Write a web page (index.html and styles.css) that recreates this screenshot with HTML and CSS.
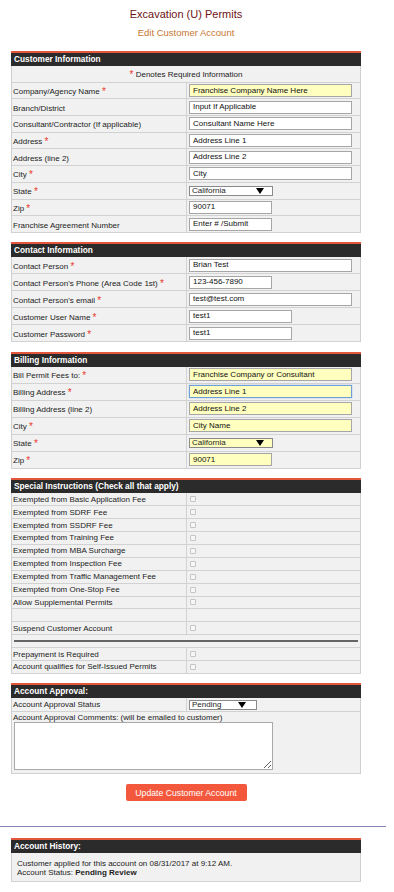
FILE: index.html
```html
<!DOCTYPE html>
<html lang="en">
<head>
    <meta charset="UTF-8">
    <meta name="viewport" content="width=device-width, initial-scale=1.0">
    <title>Excavation (U) Permits - Edit Customer Account</title>
    <link rel="stylesheet" href="styles.css">
</head>
<body>
<div class="page">
    <h1>Excavation (U) Permits</h1>
    <h2>Edit Customer Account</h2>

    <!-- Customer -->
    <div class="panel customer">
        <div class="panel-head">Customer Information</div>
        <div class="row note"><span class="req">*</span>&nbsp;Denotes Required Information</div>
        <div class="row">
            <div class="label">Company/Agency Name <span class="req">*</span></div>
            <div class="field"><input class="full yellow" value="Franchise Company Name Here"></div>
        </div>
        <div class="row">
            <div class="label">Branch/District</div>
            <div class="field"><input class="full" value="Input If Applicable"></div>
        </div>
        <div class="row">
            <div class="label">Consultant/Contractor (If applicable)</div>
            <div class="field"><input class="full" value="Consultant Name Here"></div>
        </div>
        <div class="row">
            <div class="label">Address <span class="req">*</span></div>
            <div class="field"><input class="full" value="Address Line 1"></div>
        </div>
        <div class="row">
            <div class="label">Address (line 2)</div>
            <div class="field"><input class="full" value="Address Line 2"></div>
        </div>
        <div class="row">
            <div class="label">City <span class="req">*</span></div>
            <div class="field"><input class="full" value="City"></div>
        </div>
        <div class="row">
            <div class="label">State <span class="req">*</span></div>
            <div class="field"><div class="select"><span>California</span><i class="arrow"></i></div></div>
        </div>
        <div class="row">
            <div class="label">Zip <span class="req">*</span></div>
            <div class="field"><input class="short" value="90071"></div>
        </div>
        <div class="row">
            <div class="label">Franchise Agreement Number</div>
            <div class="field"><input class="short" value="Enter # /Submit"></div>
        </div>
    </div>

    <!-- Contact -->
    <div class="panel contact">
        <div class="panel-head">Contact Information</div>
        <div class="row">
            <div class="label">Contact Person <span class="req">*</span></div>
            <div class="field"><input class="full" value="Brian Test"></div>
        </div>
        <div class="row">
            <div class="label">Contact Person's Phone (Area Code 1st) <span class="req">*</span></div>
            <div class="field"><input class="short" value="123-456-7890"></div>
        </div>
        <div class="row">
            <div class="label">Contact Person's email <span class="req">*</span></div>
            <div class="field"><input class="full" value="test@test.com"></div>
        </div>
        <div class="row">
            <div class="label">Customer User Name <span class="req">*</span></div>
            <div class="field"><input class="mid" value="test1"></div>
        </div>
        <div class="row">
            <div class="label">Customer Password <span class="req">*</span></div>
            <div class="field"><input class="mid" value="test1"></div>
        </div>
    </div>

    <!-- Billing -->
    <div class="panel contact">
        <div class="panel-head">Billing Information</div>
        <div class="row">
            <div class="label">Bill Permit Fees to: <span class="req">*</span></div>
            <div class="field"><input class="full yellow" value="Franchise Company or Consultant"></div>
        </div>
        <div class="row">
            <div class="label">Billing Address <span class="req">*</span></div>
            <div class="field"><input class="full yellow focus" value="Address Line 1"></div>
        </div>
        <div class="row">
            <div class="label">Billing Address (line 2)</div>
            <div class="field"><input class="full yellow" value="Address Line 2"></div>
        </div>
        <div class="row">
            <div class="label">City <span class="req">*</span></div>
            <div class="field"><input class="full yellow" value="City Name"></div>
        </div>
        <div class="row">
            <div class="label">State <span class="req">*</span></div>
            <div class="field"><div class="select yellow"><span>California</span><i class="arrow"></i></div></div>
        </div>
        <div class="row">
            <div class="label">Zip <span class="req">*</span></div>
            <div class="field"><input class="short yellow" value="90071"></div>
        </div>
    </div>

    <!-- Special instructions -->
    <div class="panel special">
        <div class="panel-head">Special Instructions (Check all that apply)</div>
        <div class="row"><div class="label">Exempted from Basic Application Fee</div><div class="field"><span class="check"></span></div></div>
        <div class="row"><div class="label">Exempted from SDRF Fee</div><div class="field"><span class="check"></span></div></div>
        <div class="row"><div class="label">Exempted from SSDRF Fee</div><div class="field"><span class="check"></span></div></div>
        <div class="row"><div class="label">Exempted from Training Fee</div><div class="field"><span class="check"></span></div></div>
        <div class="row"><div class="label">Exempted from MBA Surcharge</div><div class="field"><span class="check"></span></div></div>
        <div class="row"><div class="label">Exempted from Inspection Fee</div><div class="field"><span class="check"></span></div></div>
        <div class="row"><div class="label">Exempted from Traffic Management Fee</div><div class="field"><span class="check"></span></div></div>
        <div class="row"><div class="label">Exempted from One-Stop Fee</div><div class="field"><span class="check"></span></div></div>
        <div class="row"><div class="label">Allow Supplemental Permits</div><div class="field"><span class="check"></span></div></div>
        <div class="row"><div class="label"></div><div class="field"></div></div>
        <div class="row"><div class="label">Suspend Customer Account</div><div class="field"><span class="check"></span></div></div>
        <div class="row sep"><div class="rule"></div></div>
        <div class="row"><div class="label">Prepayment is Required</div><div class="field"><span class="check"></span></div></div>
        <div class="row"><div class="label">Account qualifies for Self-Issued Permits</div><div class="field"><span class="check"></span></div></div>
    </div>

    <!-- Approval -->
    <div class="panel approval">
        <div class="panel-head">Account Approval:</div>
        <div class="row">
            <div class="label">Account Approval Status</div>
            <div class="field"><div class="select narrow"><span>Pending</span><i class="arrow"></i></div></div>
        </div>
        <div class="comments">
            <div class="comments-label">Account Approval Comments: (will be emailed to customer)</div>
            <textarea></textarea>
        </div>
    </div>

    <button class="btn">Update Customer Account</button>
</div>

<hr class="divider">

<div class="page">
    <div class="panel history">
        <div class="panel-head">Account History:</div>
        <div class="history-body">
            Customer applied for this account on 08/31/2017 at 9:12 AM.<br>
            Account Status: <b>Pending Review</b>
        </div>
    </div>
</div>
</body>
</html>
```

FILE: styles.css
```css
body {
    margin: 0;
    font-family: "Liberation Sans", Arial, sans-serif;
    font-size: 8px;
    color: #1c1c1c;
    background-color: #fff;
}

.page {
    width: 372px;
}

h1 {
    margin: 0;
    padding-top: 7px;
    font-size: 11px;
    line-height: 14px;
    font-weight: normal;
    text-align: center;
    color: #6e1414;
}

h2 {
    margin: 6px 0 0;
    font-size: 9.5px;
    line-height: 12px;
    font-weight: normal;
    text-align: center;
    color: #c7762f;
}

.panel {
    width: 350px;
    box-sizing: border-box;
    margin: 12px 0 0 11px;
    background-color: #f1f1f1;
    border-left: 1px solid #cfcfcf;
    border-right: 1px solid #cfcfcf;
}

.panel + .panel {
    margin-top: 9.5px;
}

.panel-head {
    margin: 0 -1px;
    height: 13px;
    line-height: 13px;
    padding-left: 3px;
    border-top: 2px solid #e3583c;
    background-color: #2b2b2b;
    color: #fff;
    font-size: 8.3px;
    font-weight: bold;
}

.row {
    display: flex;
    align-items: center;
    height: 16.7px;
    box-sizing: border-box;
    border-bottom: 1px solid #d2d2d2;
}

.contact .row {
    height: 17px;
}

.special .row {
    height: 12.9px;
}

.approval .row {
    height: 13.7px;
}

.label {
    align-self: stretch;
    display: flex;
    align-items: center;
    width: 175px;
    flex-shrink: 0;
    box-sizing: border-box;
    padding: 2px 0 0 1px;
    border-right: 1px solid #d2d2d2;
    white-space: pre;
}

.special .label,
.approval .label {
    padding-top: 0;
}

.field {
    display: flex;
    align-items: center;
    padding-left: 2px;
}

.note {
    justify-content: center;
    padding-top: 2px;
}

.req {
    color: #e8392c;
    font-size: 10px;
    vertical-align: 1px;
}

input {
    height: 13px;
    box-sizing: border-box;
    margin: 0;
    padding: 0 3px 1px;
    border: 1px solid #a6a6a6;
    background-color: #fff;
    color: #111;
    font-family: inherit;
    font-size: 8px;
    outline: none;
}

input.full {
    width: 163px;
}

input.short {
    width: 83px;
}

input.mid {
    width: 103px;
}

.yellow {
    background-color: #ffffbf !important;
}

input.focus {
    border-color: #6f9fd6;
    box-shadow: 0 0 1px #6f9fd6;
}

.select {
    display: flex;
    align-items: center;
    justify-content: space-between;
    width: 84px;
    height: 10px;
    box-sizing: border-box;
    padding: 0 8px 0 2px;
    border: 1px solid #8a8a8a;
    background-color: #fff;
    line-height: 8px;
}

.select.narrow {
    width: 68px;
    padding-right: 10px;
}

.arrow {
    width: 0;
    height: 0;
    border-left: 4px solid transparent;
    border-right: 4px solid transparent;
    border-top: 6px solid #000;
}

.check {
    width: 6px;
    height: 6px;
    box-sizing: border-box;
    margin-left: 1px;
    border: 1px solid #c4c4c4;
    border-radius: 1px;
    background-color: #f7f7f7;
}

.sep {
    padding: 0 2px;
}

.rule {
    flex: 1;
    height: 2px;
    background-color: #666;
}

.comments {
    padding: 1px 0 3px 2px;
    border-bottom: 1px solid #d2d2d2;
}

.comments-label {
    line-height: 9px;
    padding-left: 0;
    margin-left: -1px;
}

textarea {
    display: block;
    width: 259px;
    height: 48px;
    box-sizing: border-box;
    margin: 0;
    border: 1px solid #a9a9a9;
    background-color: #fff;
    font-family: inherit;
    font-size: 8px;
}

.btn {
    display: block;
    width: 121px;
    height: 17px;
    margin: 10px auto 0;
    padding: 0;
    border: none;
    border-radius: 2px;
    background-color: #f4583c;
    color: #fff;
    font-family: inherit;
    font-size: 8.7px;
}

.divider {
    width: 386px;
    margin: 25px 0 0;
    border: 0;
    border-top: 1px solid #8585b5;
}

.history {
    margin-top: 11px;
}

.history-body {
    padding: 6px 5px 4px;
    line-height: 9px;
    border-bottom: 1px solid #d2d2d2;
}
```
